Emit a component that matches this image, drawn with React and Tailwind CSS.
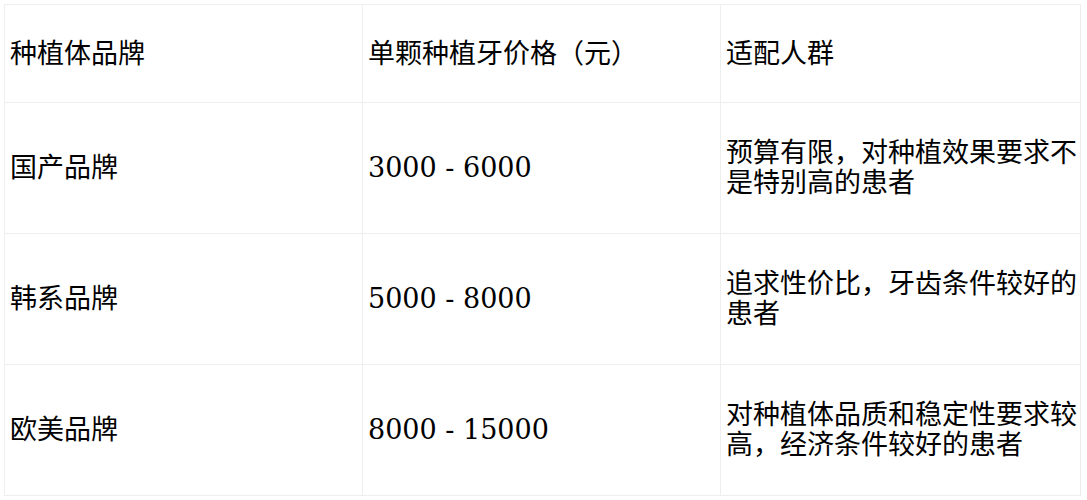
import React from "react";

const rows = [
  ["国产品牌", "3000 - 6000", "预算有限，对种植效果要求不是特别高的患者"],
  ["韩系品牌", "5000 - 8000", "追求性价比，牙齿条件较好的患者"],
  ["欧美品牌", "8000 - 15000", "对种植体品质和稳定性要求较高，经济条件较好的患者"],
];

const cell = "border border-[#eeeeee] pl-[5px] pr-[5px] py-0 align-middle text-left font-normal";
const cellLast = "border border-[#eeeeee] pl-[5px] pr-0 py-0 align-middle text-left font-normal";

export default function App() {
  return (
    <div className="bg-white w-[1087px] h-[500px] pt-[4px] pl-[4px] text-black text-[27px] leading-[30px] [font-family:'DejaVu_Serif','Noto_Sans_CJK_SC',serif]">
      <table className="border-collapse w-[1076px] table-fixed">
        <colgroup>
          <col className="w-[358px]" />
          <col className="w-[358px]" />
          <col className="w-[360px]" />
        </colgroup>
        <thead>
          <tr className="h-[98px]">
            <th className={cell}>种植体品牌</th>
            <th className={cell}>单颗种植牙价格（元）</th>
            <th className={cellLast}>适配人群</th>
          </tr>
        </thead>
        <tbody>
          {rows.map((r) => (
            <tr key={r[0]} className="h-[131px]">
              <td className={cell}>{r[0]}</td>
              <td className={cell}>{r[1]}</td>
              <td className={cellLast}>{r[2]}</td>
            </tr>
          ))}
        </tbody>
      </table>
    </div>
  );
}
